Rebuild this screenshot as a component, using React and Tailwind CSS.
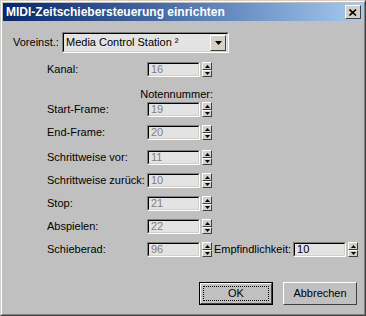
import React from "react";

const FONT = "font-['Liberation_Sans',Arial,sans-serif]";

function Spin() {
  return (
    <div className="ml-[2px] flex h-[15px] w-[10px] flex-col">
      <div className="flex h-[8px] items-center justify-center border border-t-white border-l-white border-b-[#404040] border-r-[#404040] bg-[#d4d0c8]">
        <svg width="5" height="3" viewBox="0 0 5 3"><polygon points="2.5,0 5,3 0,3" fill="#000" /></svg>
      </div>
      <div className="flex h-[7px] items-center justify-center border border-t-white border-l-white border-b-[#404040] border-r-[#404040] bg-[#d4d0c8]">
        <svg width="5" height="3" viewBox="0 0 5 3"><polygon points="0,0 5,0 2.5,3" fill="#000" /></svg>
      </div>
    </div>
  );
}

function Field({ value, enabled }) {
  return (
    <div className="flex h-[15px] w-[53px] border border-t-[#808080] border-l-[#808080] border-b-white border-r-white">
      <div
        className={
          enabled
            ? "flex h-full w-full items-center border border-t-black border-l-black border-b-[#d4d0c8] border-r-[#d4d0c8] bg-[#e3e3e3] pl-[2px] text-black"
            : "flex h-full w-full items-center border border-t-black border-l-black border-b-[#d4d0c8] border-r-[#d4d0c8] bg-[#e3e3e3] pl-[2px] text-[#808080]"
        }
      >
        {value}
      </div>
    </div>
  );
}

function Row({ label, value, mt, children }) {
  return (
    <div className={"flex h-[15px] items-center " + mt}>
      <div className="w-[100px] whitespace-nowrap">{label}</div>
      <Field value={value} />
      <Spin />
      {children}
    </div>
  );
}

export default function App() {
  return (
    <div className={"h-[316px] w-[366px] bg-[#c0c0c0] text-[11px] leading-[13px] text-black " + FONT}>
      <div className="h-full w-full border border-t-[#d4d0c8] border-l-[#d4d0c8] border-b-[#404040] border-r-[#404040]">
        <div className="flex h-full w-full flex-col border border-t-white border-l-white border-b-[#808080] border-r-[#808080] p-[1px]">
          {/* Title bar */}
          <div className="flex h-[18px] items-center justify-between bg-gradient-to-r from-[#0a246a] to-[#a6caf0] pl-[3px] pr-[2px]">
            <span className="text-[12px] font-bold text-white">MIDI-Zeitschiebersteuerung einrichten</span>
            <div className="flex h-[14px] w-[16px] items-center justify-center border border-t-white border-l-white border-b-[#404040] border-r-[#404040] bg-[#d4d0c8]">
              <svg width="8" height="7" viewBox="0 0 8 7">
                <path d="M0.5 0.5 L7 6.5 M7 0.5 L0.5 6.5" stroke="#000" strokeWidth="1.6" />
              </svg>
            </div>
          </div>

          {/* Body */}
          <div className="flex flex-1 flex-col">
            <div className="mt-[11px] flex items-center pl-[10px]">
              <div className="w-[49px]">Voreinst.:</div>
              <div className="flex h-[21px] w-[167px] border border-t-[#808080] border-l-[#808080] border-b-white border-r-white">
                <div className="flex h-full w-full items-center justify-between border border-t-black border-l-black border-b-[#d4d0c8] border-r-[#d4d0c8] bg-[#e3e3e3] pl-[2px] pr-[1px]">
                  <span>Media Control Station ²</span>
                  <div className="flex h-[16px] w-[16px] items-center justify-center border border-t-white border-l-white border-b-[#404040] border-r-[#404040] bg-[#d4d0c8]">
                    <svg width="7" height="4" viewBox="0 0 7 4"><polygon points="0,0 7,0 3.5,4" fill="#000" /></svg>
                  </div>
                </div>
              </div>
            </div>

            <div className="flex flex-col pl-[44px]">
              <Row label="Kanal:" value="16" mt="mt-[9px]" />
              <div className="mt-[11px] w-[166px] text-right">Notennummer:</div>
              <Row label="Start-Frame:" value="19" mt="mt-[1px]" />
              <Row label="End-Frame:" value="20" mt="mt-[8px]" />
              <Row label="Schrittweise vor:" value="11" mt="mt-[10px]" />
              <Row label="Schrittweise zurück:" value="10" mt="mt-[8px]" />
              <Row label="Stop:" value="21" mt="mt-[8px]" />
              <Row label="Abspielen:" value="22" mt="mt-[8px]" />
              <Row label="Schieberad:" value="96" mt="mt-[8px]">
                <span className="ml-[2px] mr-[2px] text-black">Empfindlichkeit:</span>
                <Field value="10" enabled />
                <Spin />
              </Row>
            </div>

            <div className="mt-[25px] flex justify-end gap-[10px] pr-[6px]">
              <div className="flex h-[23px] w-[74px] border border-black">
                <div className="flex h-full w-full items-center justify-center border border-t-white border-l-white border-b-[#404040] border-r-[#404040] bg-[#c0c0c0] p-[2px]">
                  <div className="flex h-full w-full items-center justify-center border border-dotted border-black">OK</div>
                </div>
              </div>
              <div className="flex h-[23px] w-[74px] items-center justify-center border border-t-white border-l-white border-b-[#404040] border-r-[#404040] bg-[#c0c0c0]">
                Abbrechen
              </div>
            </div>
          </div>
        </div>
      </div>
    </div>
  );
}
